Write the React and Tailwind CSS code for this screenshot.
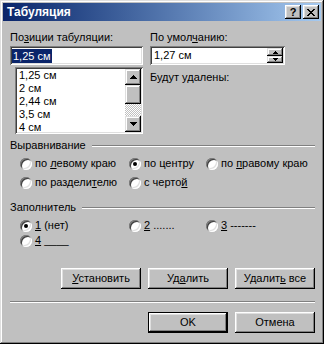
import React from "react";

const raised =
  "shadow-[inset_-1px_-1px_#000000,inset_1px_1px_#ffffff,inset_-2px_-2px_#808080,inset_2px_2px_#dfdfdf]";
const sunken =
  "shadow-[inset_1px_1px_#808080,inset_-1px_-1px_#ffffff,inset_2px_2px_#404040,inset_-2px_-2px_#dfdfdf]";
const sbBtn =
  "shadow-[inset_-1px_-1px_#000000,inset_1px_1px_#dfdfdf,inset_-2px_-2px_#808080,inset_2px_2px_#ffffff]";

function Up() {
  return (
    <svg width="7" height="4" viewBox="0 0 7 4" shapeRendering="crispEdges">
      <rect x="3" y="0" width="1" height="1" fill="#000" />
      <rect x="2" y="1" width="3" height="1" fill="#000" />
      <rect x="1" y="2" width="5" height="1" fill="#000" />
      <rect x="0" y="3" width="7" height="1" fill="#000" />
    </svg>
  );
}
function Down() {
  return (
    <svg width="7" height="4" viewBox="0 0 7 4" shapeRendering="crispEdges">
      <rect x="0" y="0" width="7" height="1" fill="#000" />
      <rect x="1" y="1" width="5" height="1" fill="#000" />
      <rect x="2" y="2" width="3" height="1" fill="#000" />
      <rect x="3" y="3" width="1" height="1" fill="#000" />
    </svg>
  );
}

function Radio({ checked, children, w }) {
  return (
    <div className={`flex items-center gap-[3px] ${w || ""}`}>
      <span
        className={`relative w-[12px] h-[12px] shrink-0 rounded-full bg-white ${sunken}`}
      >
        {checked && (
          <span className="absolute left-[4px] top-[4px] w-[4px] h-[4px] rounded-full bg-black" />
        )}
      </span>
      <span className="whitespace-pre">{children}</span>
    </div>
  );
}

function Btn({ children, def }) {
  return (
    <div
      className={`w-[80px] h-[21px] bg-[#c0c0c0] flex items-center justify-center ${
        def ? "border border-black" : ""
      } ${raised}`}
    >
      <span className="whitespace-pre">{children}</span>
    </div>
  );
}

function Etched({ className }) {
  return (
    <div
      className={`h-[2px] border-t border-t-[#808080] border-b border-b-white ${
        className || ""
      }`}
    />
  );
}

export default function App() {
  return (
    <div
      className={`w-[324px] h-[344px] bg-[#c0c0c0] p-[3px] flex flex-col text-[11px] leading-[13px] text-black font-['Liberation_Sans',Arial,sans-serif] shadow-[inset_-1px_-1px_#000000,inset_1px_1px_#dfdfdf,inset_-2px_-2px_#808080,inset_2px_2px_#ffffff]`}
    >
      {/* Title bar */}
      <div className="h-[18px] shrink-0 bg-linear-to-r from-[#0a246a] to-[#a6caf0] flex items-center pl-[4px] pr-[2px]">
        <span className="flex-1 text-white font-bold text-[12px] leading-[14px]">
          Табуляция
        </span>
        <div
          className={`w-[16px] h-[14px] bg-[#c0c0c0] flex items-center justify-center font-bold text-[11px] leading-[11px] ${raised}`}
        >
          ?
        </div>
        <div
          className={`ml-[2px] w-[16px] h-[14px] bg-[#c0c0c0] flex items-center justify-center ${raised}`}
        >
          <svg width="8" height="7" viewBox="0 0 8 7" shapeRendering="crispEdges">
            <path
              d="M0 0h2v1H0zM6 0h2v1H6zM1 1h2v1H1zM5 1h2v1H5zM2 2h4v1H2zM3 3h2v1H3zM2 4h4v1H2zM1 5h2v1H1zM5 5h2v1H5zM0 6h2v1H0zM6 6h2v1H6z"
              fill="#000"
            />
          </svg>
        </div>
      </div>

      {/* Content */}
      <div className="flex-1 flex flex-col pl-[7px] pr-[6px] pt-[10px]">
        <div className="flex items-start gap-[7px]">
          {/* left column */}
          <div className="w-[133px] flex flex-col">
            <div className="h-[13px]">
              По<u>з</u>иции табуляции:
            </div>
            <div
              className={`mt-[2px] h-[19px] bg-white flex items-center pl-[2px] ${sunken}`}
            >
              <span className="bg-[#0a246a] text-white px-[1px] leading-[14px]">
                1,25 см
              </span>
            </div>
            <div
              className={`mt-[2px] ml-[5px] w-[128px] h-[67px] bg-white p-[2px] flex ${sunken}`}
            >
              <div className="flex-1 overflow-hidden pl-[2px]">
                <div className="h-[13px]">1,25 см</div>
                <div className="h-[13px]">2 см</div>
                <div className="h-[13px]">2,44 см</div>
                <div className="h-[13px]">3,5 см</div>
                <div className="h-[13px]">4 см</div>
              </div>
              <div className="w-[16px] flex flex-col">
                <div
                  className={`h-[16px] bg-[#c0c0c0] flex items-center justify-center ${sbBtn}`}
                >
                  <Up />
                </div>
                <div className={`h-[19px] bg-[#c0c0c0] ${sbBtn}`} />
                <div className="flex-1 bg-[image:repeating-conic-gradient(#ffffff_0_25%,#c0c0c0_0_50%)] bg-[length:2px_2px]" />
                <div
                  className={`h-[16px] bg-[#c0c0c0] flex items-center justify-center ${sbBtn}`}
                >
                  <Down />
                </div>
              </div>
            </div>
          </div>

          {/* right column */}
          <div className="w-[135px] flex flex-col">
            <div className="h-[13px]">
              По умол<u>ч</u>анию:
            </div>
            <div
              className={`mt-[2px] h-[19px] bg-white flex items-center pl-[4px] pr-[2px] ${sunken}`}
            >
              <span className="flex-1">1,27 см</span>
              <div className="w-[16px] h-[15px] flex flex-col">
                <div
                  className={`h-[8px] bg-[#c0c0c0] flex items-center justify-center ${sbBtn}`}
                >
                  <svg width="5" height="3" viewBox="0 0 5 3" shapeRendering="crispEdges">
                    <path d="M2 0h1v1H2zM1 1h3v1H1zM0 2h5v1H0z" fill="#000" />
                  </svg>
                </div>
                <div
                  className={`h-[7px] bg-[#c0c0c0] flex items-center justify-center ${sbBtn}`}
                >
                  <svg width="5" height="3" viewBox="0 0 5 3" shapeRendering="crispEdges">
                    <path d="M0 0h5v1H0zM1 1h3v1H1zM2 2h1v1H2z" fill="#000" />
                  </svg>
                </div>
              </div>
            </div>
            <div className="mt-[6px] h-[13px]">Будут удалены:</div>
          </div>
        </div>

        {/* Alignment */}
        <div className="mt-[5px] h-[13px] flex items-center">
          <span>Выравнивание</span>
          <Etched className="flex-1 ml-[6px]" />
        </div>
        <div className="mt-[5px] h-[13px] flex pl-[10px]">
          <Radio w="w-[109px]">
            по <u>л</u>евому краю
          </Radio>
          <Radio w="w-[77px]" checked>
            по центру
          </Radio>
          <Radio>
            по <u>п</u>равому краю
          </Radio>
        </div>
        <div className="mt-[6px] h-[13px] flex pl-[10px]">
          <Radio w="w-[109px]">
            по раздели<u>т</u>елю
          </Radio>
          <Radio>
            с черто<u>й</u>
          </Radio>
        </div>

        {/* Filler */}
        <div className="mt-[12px] h-[13px] flex items-center">
          <span>Заполнитель</span>
          <Etched className="flex-1 ml-[6px]" />
        </div>
        <div className="mt-[5px] h-[13px] flex pl-[10px]">
          <Radio w="w-[109px]" checked>
            <u>1</u> (нет)
          </Radio>
          <Radio w="w-[77px]">
            <u>2</u> .......
          </Radio>
          <Radio>
            <u>3</u> -------
          </Radio>
        </div>
        <div className="mt-[2px] h-[13px] flex pl-[10px]">
          <Radio>
            <u>4</u> ____
          </Radio>
        </div>

        {/* Buttons */}
        <div className="mt-[21px] flex justify-end gap-[7px]">
          <Btn>
            <u>У</u>становить
          </Btn>
          <Btn>
            Уд<u>а</u>лить
          </Btn>
          <Btn>
            Удалит<u>ь</u> все
          </Btn>
        </div>
        <Etched className="mt-[12px]" />
        <div className="mt-[9px] flex justify-end gap-[7px]">
          <Btn def>OK</Btn>
          <Btn>Отмена</Btn>
        </div>
      </div>
    </div>
  );
}
